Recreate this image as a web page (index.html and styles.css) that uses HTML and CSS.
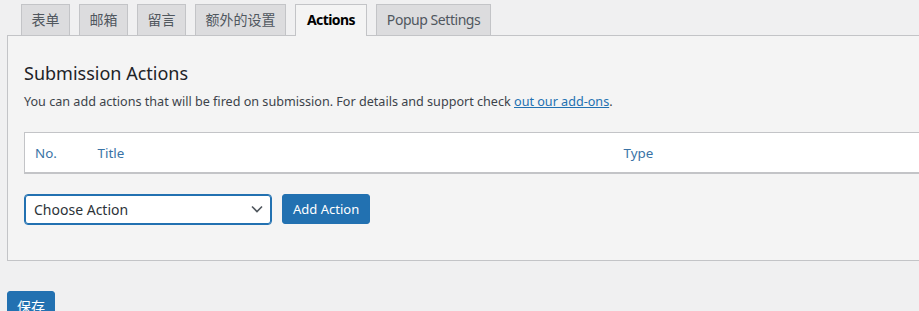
FILE: index.html
```html
<!DOCTYPE html>
<html lang="en">
<head>
  <meta charset="utf-8" />
  <title>Form settings - Actions</title>
  <link rel="stylesheet" href="styles.css">
</head>
<body>
  <div class="wrap">
    <nav class="tabs">
      <a class="tab">表单</a>
      <a class="tab">邮箱</a>
      <a class="tab">留言</a>
      <a class="tab">额外的设置</a>
      <a class="tab latin active">Actions</a>
      <a class="tab latin">Popup Settings</a>
    </nav>

    <div class="panel">
      <h2 class="panel-title">Submission Actions</h2>
      <p class="panel-desc">You can add actions that will be fired on submission. For details and support check <a href="#">out our add-ons</a>.</p>

      <table class="actions-table">
        <thead>
          <tr>
            <th class="col-no">No.</th>
            <th class="col-title">Title</th>
            <th class="col-type">Type</th>
          </tr>
        </thead>
      </table>

      <div class="add-row">
        <div class="select">
          <span>Choose Action</span>
          <svg width="12" height="8" viewBox="0 0 12 8"><path d="M1 1.5l5 5 5-5" fill="none" stroke="#50575e" stroke-width="1.6"/></svg>
        </div>
        <button class="btn">Add Action</button>
      </div>
    </div>

    <button class="btn save">保存</button>
  </div>
</body>
</html>
```

FILE: styles.css
```css
* {
  box-sizing: border-box;
}

body {
  margin: 0;
  background-color: #f0f0f1;
  font-family: "Noto Sans", "Noto Sans CJK SC", sans-serif;
  font-size: 13px;
  color: #3c434a;
  overflow: hidden;
}

.wrap {
  padding: 4px 0 0 7px;
  width: 940px;
}

/* Tabs */
.tabs {
  display: flex;
  gap: 9px;
  padding-left: 14px;
  height: 31px;
  align-items: flex-end;
}

.tab {
  display: block;
  height: 31px;
  padding: 0 9.5px;
  line-height: 29px;
  font-size: 14px;
  color: #50575e;
  background-color: #dcdcde;
  border: 1px solid #c3c4c7;
  border-bottom: none;
}

.tab.latin {
  letter-spacing: -0.45px;
  padding: 0 10px;
}

.tab.active {
  height: 32px;
  margin-bottom: -1px;
  padding: 0 11px;
  background-color: #f4f4f4;
  color: #000;
  font-weight: 700;
  letter-spacing: -0.6px;
  position: relative;
}

/* Panel */
.panel {
  background-color: #f4f4f4;
  border: 1px solid #c3c4c7;
  padding: 25px 0 36px 16px;
  height: 226px;
}

.panel-title {
  margin: 0;
  font-size: 18px;
  font-weight: 400;
  color: #1d2327;
  line-height: 24px;
}

.panel-desc {
  margin: 8px 0 0 0;
  font-size: 12.6px;
  line-height: 18px;
  color: #3c434a;
}

.panel-desc a {
  color: #2271b1;
}

.actions-table {
  margin-top: 21px;
  width: 900px;
  border-collapse: collapse;
  background-color: #fff;
  border-top: 1px solid #c3c4c7;
  border-left: 1px solid #c3c4c7;
  border-bottom: 2px solid #c3c4c7;
}

.actions-table th {
  text-align: left;
  font-weight: 400;
  font-size: 13.4px;
  color: #3a73a6;
  height: 40px;
  padding: 2px 0 0 10px;
}

.col-no {
  width: 63px;
}

.col-title {
  width: 526px;
}

/* Add action row */
.add-row {
  display: flex;
  gap: 10px;
  margin-top: 20px;
}

.select {
  width: 248px;
  height: 31px;
  border: 1px solid #2271b1;
  border-radius: 4px;
  background-color: #fff;
  display: flex;
  align-items: center;
  justify-content: space-between;
  padding: 0 8px 0 9px;
  font-size: 14px;
  color: #2c3338;
  box-shadow: 0 0 0 1px #2271b1 inset;
}

.btn {
  height: 30px;
  padding: 0 10px;
  border: 1px solid #2271b1;
  border-radius: 3px;
  background-color: #2271b1;
  color: #fff;
  font-family: inherit;
  font-size: 13px;
}

.save {
  margin-top: 30px;
  height: 30px;
  padding: 0 9px;
  font-size: 14px;
}
```
